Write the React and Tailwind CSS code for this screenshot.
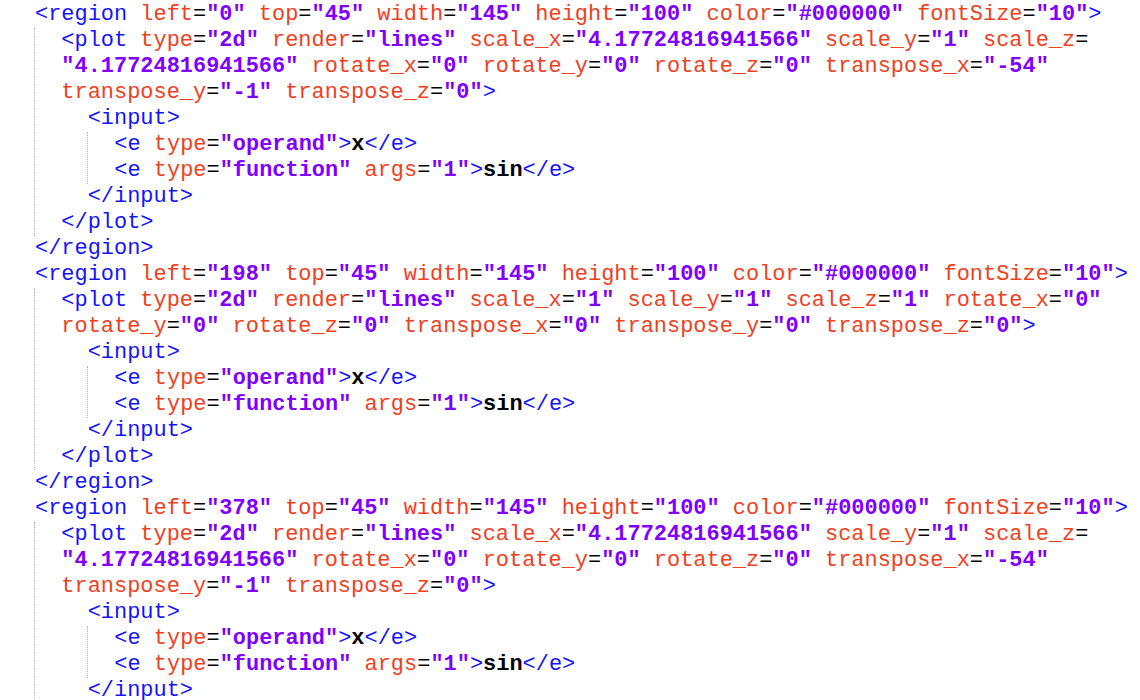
import React from "react";

const TOKEN = /(<\/?[A-Za-z_]+|\/?>|[A-Za-z_][\w]*(?==)|=|"[^"]*"|\s+|[^<"=\s>]+)/g;

function Code({ text }) {
  const parts = text.match(TOKEN) || [];
  return (
    <>
      {parts.map((p, i) => {
        if (/^<\/?[A-Za-z_]/.test(p) || /^\/?>$/.test(p))
          return <span key={i} className="text-[#1414ff]">{p}</span>;
        if (p === "=") return <span key={i} className="text-black">{p}</span>;
        if (p.startsWith('"'))
          return <span key={i} className="font-bold text-[#8000ff]">{p}</span>;
        if (/^\s+$/.test(p)) return <span key={i}>{p}</span>;
        if (i + 1 < parts.length && parts[i + 1] === "=")
          return <span key={i} className="text-[#f0401e]">{p}</span>;
        return <span key={i} className="font-bold text-black">{p}</span>;
      })}
    </>
  );
}

function L({ t }) {
  return (
    <div className="h-[26px] whitespace-pre leading-[26px]">
      <Code text={t} />
    </div>
  );
}

function Guide({ className = "", children }) {
  return (
    <div className={"border-l border-dotted border-[#b4b4b4] " + className}>{children}</div>
  );
}

function Region({ open, plot }) {
  return (
    <div>
      <div className="pl-px">
        <L t={open} />
      </div>
      <Guide>
        {plot.map((t, i) => (
          <L key={i} t={"  " + t} />
        ))}
        <L t="    <input>" />
        <Guide className="ml-[52px]">
          <L t={'  <e type="operand">x</e>'} />
          <L t={'  <e type="function" args="1">sin</e>'} />
        </Guide>
        <L t="    </input>" />
        <L t="  </plot>" />
      </Guide>
      <div className="pl-px">
        <L t="</region>" />
      </div>
    </div>
  );
}

export default function App() {
  const plotA = [
    '<plot type="2d" render="lines" scale_x="4.17724816941566" scale_y="1" scale_z=',
    '"4.17724816941566" rotate_x="0" rotate_y="0" rotate_z="0" transpose_x="-54"',
    'transpose_y="-1" transpose_z="0">',
  ];
  const plotB = [
    '<plot type="2d" render="lines" scale_x="1" scale_y="1" scale_z="1" rotate_x="0"',
    'rotate_y="0" rotate_z="0" transpose_x="0" transpose_y="0" transpose_z="0">',
  ];
  return (
    <div
      className="h-[700px] w-[1140px] overflow-hidden bg-white pl-[34px] pt-[2px] text-[21.95px] text-black"
      style={{ fontFamily: '"Liberation Mono", "Courier New", monospace' }}
    >
      <Region
        open={'<region left="0" top="45" width="145" height="100" color="#000000" fontSize="10">'}
        plot={plotA}
      />
      <Region
        open={'<region left="198" top="45" width="145" height="100" color="#000000" fontSize="10">'}
        plot={plotB}
      />
      <Region
        open={'<region left="378" top="45" width="145" height="100" color="#000000" fontSize="10">'}
        plot={plotA}
      />
    </div>
  );
}
